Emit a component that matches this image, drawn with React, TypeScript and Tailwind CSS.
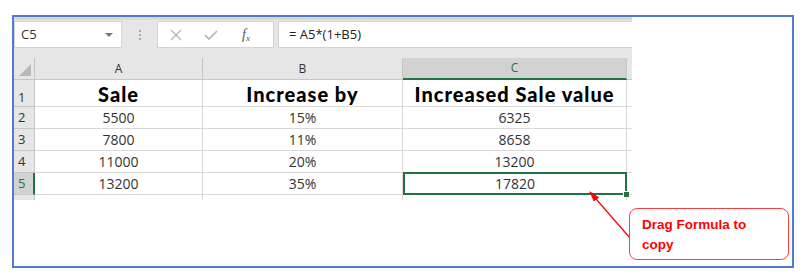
import React from "react";

const rows = [
  ["5500", "15%", "6325"],
  ["7800", "11%", "8658"],
  ["11000", "20%", "13200"],
  ["13200", "35%", "17820"],
];

const cols = "grid-cols-[21px_168px_200px_224px_5px]";
const dataFont = { fontFamily: '"Open Sans", "Liberation Sans", sans-serif' };
const headFont = { fontFamily: '"Lato", "DejaVu Sans", sans-serif' };

function Cell({ children, className = "" }: { children?: React.ReactNode; className?: string }) {
  return (
    <div className={`overflow-hidden border-r border-b border-[#d9d9d9] flex items-center justify-center ${className}`}>
      {children}
    </div>
  );
}

export default function App() {
  return (
    <div className="w-[803px] h-[277px] bg-white pt-[15px] pl-[12px]">
      <div className="relative w-[782px] h-[253px] border-2 border-[#4f7bd0] bg-white">
        <div className="w-[618px]">
          {/* formula bar */}
          <div className="h-[41px] bg-[#e6e6e6] border-t-[3px] border-[#d9d9d9] flex items-start pt-[1px] gap-0">
            <div className="w-[108px] h-[27px] bg-white border border-[#d4d4d4] flex items-center justify-between pl-[6px] pr-[8px] text-[13px] text-[#333]" style={dataFont}>
              <span>C5</span>
              <span className="w-0 h-0 border-l-[4px] border-r-[4px] border-t-[4px] border-l-transparent border-r-transparent border-t-[#777]" />
            </div>
            <div className="w-[35px] h-[27px] flex flex-col items-center justify-center gap-[2px]">
              <span className="w-[2px] h-[2px] bg-[#aaa]" />
              <span className="w-[2px] h-[2px] bg-[#aaa]" />
              <span className="w-[2px] h-[2px] bg-[#aaa]" />
            </div>
            <div className="w-[117px] h-[27px] bg-white border border-[#d4d4d4] flex items-center pl-[12px] gap-[22px]">
              <svg width="12" height="12" viewBox="0 0 12 12"><path d="M1 1L11 11M11 1L1 11" stroke="#b5b5b5" strokeWidth="1.4" /></svg>
              <svg width="14" height="12" viewBox="0 0 14 12"><path d="M1 6L5 10L13 2" stroke="#b5b5b5" strokeWidth="1.6" fill="none" /></svg>
              <span className="text-[14px] italic text-[#555] ml-[2px]" style={{ fontFamily: '"Liberation Serif", serif' }}>
                f<sub className="text-[9px]">x</sub>
              </span>
            </div>
            <div className="w-[4px]" />
            <div className="flex-1 h-[27px] bg-white border border-[#d4d4d4] border-r-0 flex items-center pl-[10px] text-[13px] text-[#222]" style={dataFont}>
              = A5*(1+B5)
            </div>
          </div>

          {/* column headers */}
          <div className={`grid ${cols} h-[22px] bg-[#e6e6e6] text-[12px] text-[#333]`} style={dataFont}>
            <div className="relative border-r border-b border-[#c6c6c6] bg-[#e6e6e6]">
              <span className="absolute right-[3px] bottom-[3px] w-0 h-0" style={{ borderBottom: "12px solid #b8b8b8", borderLeft: "12px solid transparent" }} />
            </div>
            <div className="border-r border-b border-[#c6c6c6] flex items-center justify-center">A</div>
            <div className="border-r border-b border-[#c6c6c6] flex items-center justify-center">B</div>
            <div className="border-r border-[#c6c6c6] border-b-2 border-b-[#217346] bg-[#d2d2d2] text-[#217346] flex items-center justify-center">C</div>
            <div className="border-b border-[#c6c6c6]" />
          </div>

          {/* header row */}
          <div className={`grid ${cols} h-[27px]`}>
            <div className="bg-[#e6e6e6] border-r border-b border-[#c6c6c6] flex items-end pb-[2px] pl-[4px] text-[13px] leading-none text-[#333]" style={dataFont}>1</div>
            <Cell className="font-black text-[20px] leading-none tracking-[1px] text-black pt-[1px]"><span style={headFont}>Sale</span></Cell>
            <Cell className="font-black text-[20px] leading-none tracking-[1px] text-black pt-[1px]"><span style={headFont}>Increase by</span></Cell>
            <Cell className="font-black text-[20px] leading-none tracking-[1px] text-black pt-[1px]"><span style={headFont}>Increased Sale value</span></Cell>
            <div className="border-b border-[#d9d9d9]" />
          </div>

          {rows.map((r, i) => {
            const last = i === rows.length - 1;
            return (
              <div key={i} className={`grid ${cols} h-[22px] text-[14px] text-[#333]`} style={dataFont}>
                <div className={`border-b border-[#c6c6c6] flex items-center pl-[4px] text-[13px] ${last ? "bg-[#d2d2d2] text-[#217346] border-r-2 border-r-[#217346]" : "bg-[#e6e6e6] border-r"}`}>
                  {i + 2}
                </div>
                <Cell>{r[0]}</Cell>
                <Cell>{r[1]}</Cell>
                {last ? (
                  <div className="relative border-2 border-[#217346] -mt-[1px] h-[23px] flex items-center justify-center">
                    {r[2]}
                    <span className="absolute -right-[5px] -bottom-[5px] w-[7px] h-[7px] bg-[#217346] border border-white" />
                  </div>
                ) : (
                  <Cell>{r[2]}</Cell>
                )}
                <div className="border-b border-[#d9d9d9]" />
              </div>
            );
          })}

          {/* grid stub below last row */}
          <div className={`grid ${cols} h-[5px]`}>
            <div className="bg-[#e6e6e6] border-r border-[#c6c6c6]" />
            <div className="border-r border-[#d9d9d9]" />
            <div className="border-r border-[#d9d9d9]" />
            <div className="border-r border-[#d9d9d9]" />
            <div />
          </div>
        </div>

        {/* callout arrow */}
        <svg className="absolute left-0 top-0 pointer-events-none" width="782" height="253">
          <defs>
            <marker id="ah" markerWidth="11" markerHeight="7" refX="10" refY="3.5" orient="auto" markerUnits="userSpaceOnUse">
              <path d="M0 0L11 3.5L0 7Z" fill="#ff0000" />
            </marker>
          </defs>
          <line x1="616" y1="221" x2="576" y2="175" stroke="#ff0000" strokeWidth="1.2" markerEnd="url(#ah)" />
        </svg>

        {/* callout box */}
        <div className="absolute left-[615px] top-[191px] w-[160px] h-[52px] border-[1.5px] border-[#ff4040] rounded-[8px] bg-white pl-[12px] pt-[6px] text-[13.5px] leading-[20px] font-bold text-[#ff0000]" style={{ fontFamily: '"Liberation Sans", "Open Sans", sans-serif' }}>
          Drag Formula to
          <br />
          copy
        </div>
      </div>
    </div>
  );
}
